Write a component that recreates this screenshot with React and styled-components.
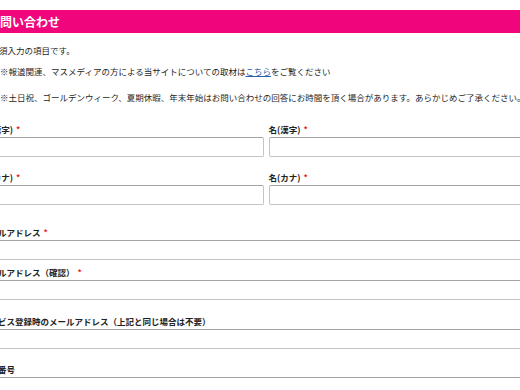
import React from 'react'
import styled, { createGlobalStyle } from 'styled-components'

const GlobalStyle = createGlobalStyle`
  html, body {
    margin: 0;
    padding: 0;
    background: #ffffff;
    overflow: hidden;
  }
  body {
    font-family: "Noto Sans CJK JP", "Noto Sans", sans-serif;
    color: #222222;
  }
`

const Viewport = styled.div`
  width: 520px;
  height: 390px;
  overflow: hidden;
`

const Page = styled.div`
  width: 570px;
  margin-left: -19px;
  padding-top: 10px;
`

const TitleBar = styled.h1`
  margin: 0;
  height: 23px;
  background: #f0057d;
  color: #ffffff;
  font-size: 12px;
  font-weight: 700;
  line-height: 23px;
  padding-left: 7px;
  white-space: nowrap;
`

const Notes = styled.div`
  padding-top: 11px;
`

const Note = styled.p`
  margin: ${p => p.$mt || 0}px 0 0 ${p => p.$indent}px;
  font-size: 8.5px;
  line-height: 12px;
  white-space: nowrap;
  color: #1e1e1e;
`

const Link = styled.a`
  color: #2a5fb0;
  text-decoration: underline;
`

const Form = styled.form`
  display: flex;
  flex-direction: column;
`

const Row = styled.div`
  display: grid;
  grid-template-columns: 1fr 1fr;
  column-gap: 5px;
  margin-top: ${p => p.$mt}px;
`

const Field = styled.div`
  display: flex;
  flex-direction: column;
  margin-top: ${p => p.$mt || 0}px;
`

const Label = styled.label`
  display: block;
  font-size: 8.5px;
  line-height: 12px;
  font-weight: 700;
  color: #222222;
  margin-bottom: 2px;
  white-space: nowrap;
`

const Required = styled.span`
  color: #e8202a;
  margin-left: 3px;
`

const Input = styled.input`
  box-sizing: border-box;
  width: 100%;
  height: 20px;
  margin: 0;
  border: 1px solid #c4c4c4;
  border-top-color: #a4a4a4;
  border-radius: 2px;
  background: #ffffff;
  font-size: 9px;
  padding: 0 4px;
`

const FormField = ({ label, required, mt }) => (
  <Field $mt={mt}>
    <Label>
      {label}
      {required && <Required>*</Required>}
    </Label>
    <Input type="text" />
  </Field>
)

export default function App() {
  return (
    <Viewport>
      <GlobalStyle />
      <Page>
        <TitleBar>お問い合わせ</TitleBar>
        <Notes>
          <Note $indent={1}>※必須入力の項目です。</Note>
          <Note $indent={19} $mt={9}>
            ※報道関連、マスメディアの方による当サイトについての取材は<Link href="#">こちら</Link>をご覧ください
          </Note>
          <Note $indent={19} $mt={14}>
            ※土日祝、ゴールデンウィーク、夏期休暇、年末年始はお問い合わせの回答にお時間を頂く場合があります。あらかじめご了承ください。
          </Note>
        </Notes>
        <Form>
          <Row $mt={20}>
            <FormField label="姓(漢字)" required />
            <FormField label="名(漢字)" required />
          </Row>
          <Row $mt={14}>
            <FormField label="姓(カナ)" required />
            <FormField label="名(カナ)" required />
          </Row>
          <FormField label="メールアドレス" required mt={21} />
          <FormField label="メールアドレス（確認）" required mt={6} />
          <FormField label="サービス登録時のメールアドレス（上記と同じ場合は不要）" mt={15} />
          <FormField label="電話番号" mt={14} />
        </Form>
      </Page>
    </Viewport>
  )
}
